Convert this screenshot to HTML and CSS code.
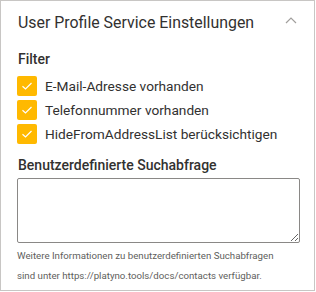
FILE: index.html
```html
<!DOCTYPE html>
<html lang="de">
<head>
    <meta charset="UTF-8">
    <meta name="viewport" content="width=device-width, initial-scale=1.0">
    <title>User Profile Service Einstellungen</title>
    <link rel="stylesheet" href="styles.css">
</head>
<body>
    <div class="panel">
        <div class="panel-header">
            <h2>User Profile Service Einstellungen</h2>
            <svg class="chevron" width="12" height="8" viewBox="0 0 12 8">
                <path d="M1 7 L6 2 L11 7" fill="none" stroke="#a19f9d" stroke-width="1.2"/>
            </svg>
        </div>

        <div class="section-title">Filter</div>
        <label class="check">
            <span class="box"><svg width="12" height="10" viewBox="0 0 12 10"><path d="M1.5 5.2 L4.5 8 L10.5 2" fill="none" stroke="#fff" stroke-width="1.2"/></svg></span>
            E-Mail-Adresse vorhanden
        </label>
        <label class="check">
            <span class="box"><svg width="12" height="10" viewBox="0 0 12 10"><path d="M1.5 5.2 L4.5 8 L10.5 2" fill="none" stroke="#fff" stroke-width="1.2"/></svg></span>
            Telefonnummer vorhanden
        </label>
        <label class="check">
            <span class="box"><svg width="12" height="10" viewBox="0 0 12 10"><path d="M1.5 5.2 L4.5 8 L10.5 2" fill="none" stroke="#fff" stroke-width="1.2"/></svg></span>
            HideFromAddressList berücksichtigen
        </label>

        <div class="section-title query-title">Benutzerdefinierte Suchabfrage</div>
        <textarea class="query"></textarea>
        <p class="help">Weitere Informationen zu benutzerdefinierten Suchabfragen<br>sind unter https://platyno.tools/docs/contacts verfügbar.</p>
    </div>
</body>
</html>
```

FILE: styles.css
```css
:root {
    --text-color: #323130;
    --muted-color: #605e5c;
    --accent-color: #ffb900;
    --border-color: #c8c6c4;
    --input-border: #8a8886;
}

body {
    font-family: 'Roboto', 'Open Sans', sans-serif;
    color: var(--text-color);
    margin: 0;
    background: #ffffff;
}

.panel {
    width: 315px;
    height: 291px;
    box-sizing: border-box;
    border: 1px solid var(--border-color);
    padding: 0 16px 0 16px;
}

.panel-header {
    display: flex;
    align-items: center;
    justify-content: space-between;
    height: 42px;
    padding-left: 1px;
}

.panel-header h2 {
    margin: 0;
    font-size: 15.9px;
    font-weight: 400;
    white-space: nowrap;
}

.chevron {
    margin-right: 1px;
    margin-top: -4px;
}

.section-title {
    font-size: 14px;
    font-weight: 500;
    margin-top: 8px;
    margin-bottom: 9px;
    padding-left: 1px;
}

.check {
    display: flex;
    align-items: center;
    gap: 8px;
    font-size: 13.7px;
    height: 20px;
    margin-bottom: 4px;
}

.box {
    width: 20px;
    height: 20px;
    border-radius: 2px;
    background-color: var(--accent-color);
    display: flex;
    align-items: center;
    justify-content: center;
}

.query-title {
    margin-top: 13px;
    margin-bottom: 5px;
}

.query {
    display: block;
    width: 283px;
    height: 65px;
    box-sizing: border-box;
    border: 1px solid var(--input-border);
    border-radius: 2px;
    margin: 0;
    padding: 6px 8px;
    font-family: inherit;
}

.help {
    margin: 3px 0 0 0;
    font-size: 9.7px;
    line-height: 20px;
    color: var(--muted-color);
    white-space: nowrap;
}
```
